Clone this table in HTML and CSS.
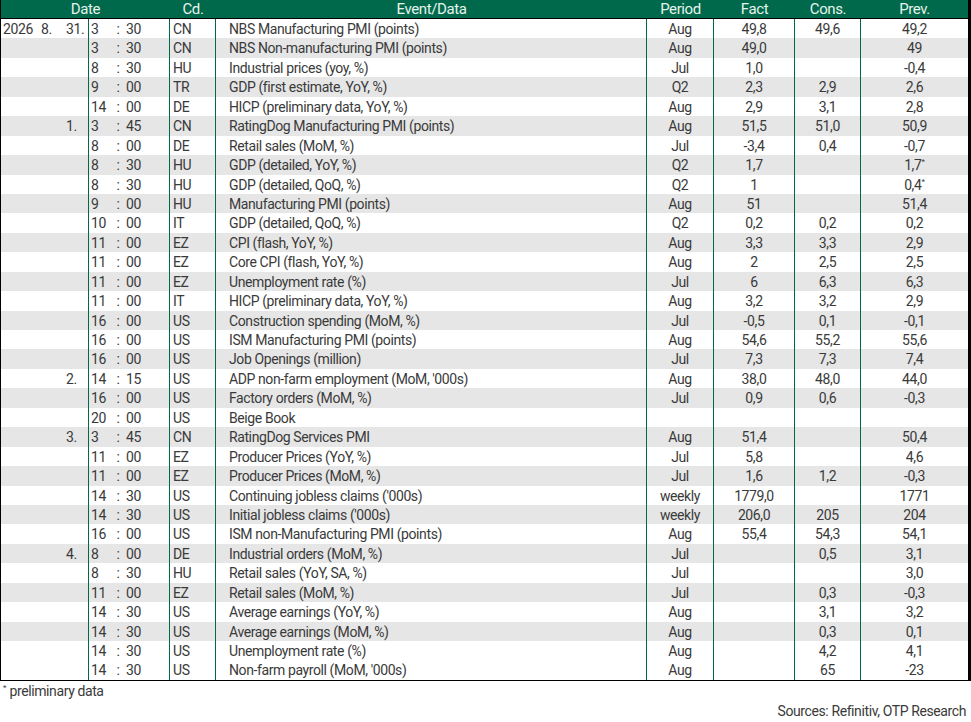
FILE: index.html
```html
<!DOCTYPE html>
<html>
<head>
<meta charset="utf-8">
<link rel="stylesheet" href="styles.css">
</head>
<body>
<div class="sheet">
  <div class="table">
    <div class="head">
      <span class="h-date">Date</span><span>Cd.</span><span>Event/Data</span><span>Period</span><span>Fact</span><span>Cons.</span><span>Prev.</span>
    </div>
    <div class="rows">
      <div class="row"><span>2026</span><span>8.</span><span>31.</span><span>3</span><span>:</span><span>30</span><span>CN</span><span>NBS Manufacturing PMI (points)</span><span>Aug</span><span>49,8</span><span>49,6</span><span>49,2</span></div>
      <div class="row"><span></span><span></span><span></span><span>3</span><span>:</span><span>30</span><span>CN</span><span>NBS Non-manufacturing PMI (points)</span><span>Aug</span><span>49,0</span><span></span><span>49</span></div>
      <div class="row"><span></span><span></span><span></span><span>8</span><span>:</span><span>30</span><span>HU</span><span>Industrial prices (yoy, %)</span><span>Jul</span><span>1,0</span><span></span><span>-0,4</span></div>
      <div class="row"><span></span><span></span><span></span><span>9</span><span>:</span><span>00</span><span>TR</span><span>GDP (first estimate, YoY, %)</span><span>Q2</span><span>2,3</span><span>2,9</span><span>2,6</span></div>
      <div class="row"><span></span><span></span><span></span><span>14</span><span>:</span><span>00</span><span>DE</span><span>HICP (preliminary data, YoY, %)</span><span>Aug</span><span>2,9</span><span>3,1</span><span>2,8</span></div>
      <div class="row"><span></span><span></span><span>1.</span><span>3</span><span>:</span><span>45</span><span>CN</span><span>RatingDog Manufacturing PMI (points)</span><span>Aug</span><span>51,5</span><span>51,0</span><span>50,9</span></div>
      <div class="row"><span></span><span></span><span></span><span>8</span><span>:</span><span>00</span><span>DE</span><span>Retail sales (MoM, %)</span><span>Jul</span><span>-3,4</span><span>0,4</span><span>-0,7</span></div>
      <div class="row"><span></span><span></span><span></span><span>8</span><span>:</span><span>30</span><span>HU</span><span>GDP (detailed, YoY, %)</span><span>Q2</span><span>1,7</span><span></span><span>1,7<sup class="star">*</sup></span></div>
      <div class="row"><span></span><span></span><span></span><span>8</span><span>:</span><span>30</span><span>HU</span><span>GDP (detailed, QoQ, %)</span><span>Q2</span><span>1</span><span></span><span>0,4<sup class="star">*</sup></span></div>
      <div class="row"><span></span><span></span><span></span><span>9</span><span>:</span><span>00</span><span>HU</span><span>Manufacturing PMI (points)</span><span>Aug</span><span>51</span><span></span><span>51,4</span></div>
      <div class="row"><span></span><span></span><span></span><span>10</span><span>:</span><span>00</span><span>IT</span><span>GDP (detailed, QoQ, %)</span><span>Q2</span><span>0,2</span><span>0,2</span><span>0,2</span></div>
      <div class="row"><span></span><span></span><span></span><span>11</span><span>:</span><span>00</span><span>EZ</span><span>CPI (flash, YoY, %)</span><span>Aug</span><span>3,3</span><span>3,3</span><span>2,9</span></div>
      <div class="row"><span></span><span></span><span></span><span>11</span><span>:</span><span>00</span><span>EZ</span><span>Core CPI (flash, YoY, %)</span><span>Aug</span><span>2</span><span>2,5</span><span>2,5</span></div>
      <div class="row"><span></span><span></span><span></span><span>11</span><span>:</span><span>00</span><span>EZ</span><span>Unemployment rate (%)</span><span>Jul</span><span>6</span><span>6,3</span><span>6,3</span></div>
      <div class="row"><span></span><span></span><span></span><span>11</span><span>:</span><span>00</span><span>IT</span><span>HICP (preliminary data, YoY, %)</span><span>Aug</span><span>3,2</span><span>3,2</span><span>2,9</span></div>
      <div class="row"><span></span><span></span><span></span><span>16</span><span>:</span><span>00</span><span>US</span><span>Construction spending (MoM, %)</span><span>Jul</span><span>-0,5</span><span>0,1</span><span>-0,1</span></div>
      <div class="row"><span></span><span></span><span></span><span>16</span><span>:</span><span>00</span><span>US</span><span>ISM Manufacturing PMI (points)</span><span>Aug</span><span>54,6</span><span>55,2</span><span>55,6</span></div>
      <div class="row"><span></span><span></span><span></span><span>16</span><span>:</span><span>00</span><span>US</span><span>Job Openings (million)</span><span>Jul</span><span>7,3</span><span>7,3</span><span>7,4</span></div>
      <div class="row"><span></span><span></span><span>2.</span><span>14</span><span>:</span><span>15</span><span>US</span><span>ADP non-farm employment (MoM, '000s)</span><span>Aug</span><span>38,0</span><span>48,0</span><span>44,0</span></div>
      <div class="row"><span></span><span></span><span></span><span>16</span><span>:</span><span>00</span><span>US</span><span>Factory orders (MoM, %)</span><span>Jul</span><span>0,9</span><span>0,6</span><span>-0,3</span></div>
      <div class="row"><span></span><span></span><span></span><span>20</span><span>:</span><span>00</span><span>US</span><span>Beige Book</span><span></span><span></span><span></span><span></span></div>
      <div class="row"><span></span><span></span><span>3.</span><span>3</span><span>:</span><span>45</span><span>CN</span><span>RatingDog Services PMI</span><span>Aug</span><span>51,4</span><span></span><span>50,4</span></div>
      <div class="row"><span></span><span></span><span></span><span>11</span><span>:</span><span>00</span><span>EZ</span><span>Producer Prices (YoY, %)</span><span>Jul</span><span>5,8</span><span></span><span>4,6</span></div>
      <div class="row"><span></span><span></span><span></span><span>11</span><span>:</span><span>00</span><span>EZ</span><span>Producer Prices (MoM, %)</span><span>Jul</span><span>1,6</span><span>1,2</span><span>-0,3</span></div>
      <div class="row"><span></span><span></span><span></span><span>14</span><span>:</span><span>30</span><span>US</span><span>Continuing jobless claims ('000s)</span><span>weekly</span><span>1779,0</span><span></span><span>1771</span></div>
      <div class="row"><span></span><span></span><span></span><span>14</span><span>:</span><span>30</span><span>US</span><span>Initial jobless claims ('000s)</span><span>weekly</span><span>206,0</span><span>205</span><span>204</span></div>
      <div class="row"><span></span><span></span><span></span><span>16</span><span>:</span><span>00</span><span>US</span><span>ISM non-Manufacturing PMI (points)</span><span>Aug</span><span>55,4</span><span>54,3</span><span>54,1</span></div>
      <div class="row"><span></span><span></span><span>4.</span><span>8</span><span>:</span><span>00</span><span>DE</span><span>Industrial orders (MoM, %)</span><span>Jul</span><span></span><span>0,5</span><span>3,1</span></div>
      <div class="row"><span></span><span></span><span></span><span>8</span><span>:</span><span>30</span><span>HU</span><span>Retail sales (YoY, SA, %)</span><span>Jul</span><span></span><span></span><span>3,0</span></div>
      <div class="row"><span></span><span></span><span></span><span>11</span><span>:</span><span>00</span><span>EZ</span><span>Retail sales (MoM, %)</span><span>Jul</span><span></span><span>0,3</span><span>-0,3</span></div>
      <div class="row"><span></span><span></span><span></span><span>14</span><span>:</span><span>30</span><span>US</span><span>Average earnings (YoY, %)</span><span>Aug</span><span></span><span>3,1</span><span>3,2</span></div>
      <div class="row"><span></span><span></span><span></span><span>14</span><span>:</span><span>30</span><span>US</span><span>Average earnings (MoM, %)</span><span>Aug</span><span></span><span>0,3</span><span>0,1</span></div>
      <div class="row"><span></span><span></span><span></span><span>14</span><span>:</span><span>30</span><span>US</span><span>Unemployment rate (%)</span><span>Aug</span><span></span><span>4,2</span><span>4,1</span></div>
      <div class="row plain"><span></span><span></span><span></span><span>14</span><span>:</span><span>30</span><span>US</span><span>Non-farm payroll (MoM, '000s)</span><span>Aug</span><span></span><span>65</span><span>-23</span></div>
    </div>
  </div>
  <div class="note"><sup class="star">*</sup> preliminary data</div>
  <div class="source">Sources: Refinitiv, OTP Research</div>
</div>
</body>
</html>
```

FILE: styles.css
```css
html, body {
  margin: 0;
  padding: 0;
  background: #ffffff;
}

body {
  font-family: "Roboto", "Liberation Sans", sans-serif;
  font-size: 14px;
  letter-spacing: -0.4px;
  color: #3a3a3a;
}

.sheet {
  width: 971px;
}

.table {
  width: 971px;
  box-sizing: border-box;
  border-left: 1px solid #000;
  border-right: 3px solid #000;
  border-bottom: 1px solid #000;
}

.head,
.row {
  display: grid;
  grid-template-columns: 37px 24px 27px 25px 8px 48px 46px 431px 67px 81px 66px 107px;
}

.head {
  height: 18px;
  line-height: 18px;
  background: #00694b;
  color: #e6f3ec;
  border-bottom: 1px solid #000;
  text-align: center;
  font-size: 15px;
}

.head .h-date {
  grid-column: 1 / 7;
}

.row {
  height: 19.45px;
  line-height: 20px;
  white-space: nowrap;
}

.rows .row:nth-child(even) {
  background: #e6e6e6;
}

.rows .row.plain {
  background: transparent;
}

.row > span {
  box-sizing: border-box;
  overflow: visible;
}

.row > span:nth-child(3),
.row > span:nth-child(6),
.row > span:nth-child(7),
.row > span:nth-child(8),
.row > span:nth-child(9),
.row > span:nth-child(10),
.row > span:nth-child(11) {
  border-right: 1px solid #00694b;
}

.row > span:nth-child(1) { padding-left: 2px; }
.row > span:nth-child(2) { padding-left: 3px; }
.row > span:nth-child(3) { padding-left: 4px; }
.row > span:nth-child(4) { padding-left: 2px; }
.row > span:nth-child(5) { text-align: center; }
.row > span:nth-child(6) { padding-left: 4px; }
.row > span:nth-child(7) { padding-left: 3px; }
.row > span:nth-child(8) { padding-left: 13px; }
.row > span:nth-child(n+9) { text-align: center; }

.star {
  font-size: 8px;
  line-height: 0;
  vertical-align: 6px;
  letter-spacing: 0;
}

.note {
  padding: 1px 0 0 3px;
  height: 19px;
  line-height: 19px;
}

.source {
  text-align: right;
  padding-right: 5px;
  line-height: 19px;
  margin-top: 1px;
}
```
